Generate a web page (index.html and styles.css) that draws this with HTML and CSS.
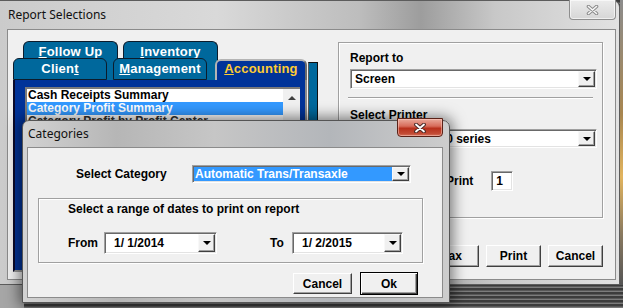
FILE: index.html
```html
<!DOCTYPE html>
<html lang="en">
<head>
    <meta charset="UTF-8" />
    <title>Report Selections</title>
    <link rel="stylesheet" href="styles.css">
</head>
<body>
    <div class="desktop">
        <div class="window main_win">
            <div class="titlebar">
                <span class="win_title">Report Selections</span>
                <span class="close_btn close_off">
                    <svg width="13" height="10" viewBox="0 0 13 10">
                        <path d="M2.5 1.5 L10.5 8.5 M10.5 1.5 L2.5 8.5" stroke="#8c8c8c" stroke-width="3.6" stroke-linecap="round" />
                        <path d="M2.5 1.5 L10.5 8.5 M10.5 1.5 L2.5 8.5" stroke="#f6f6f6" stroke-width="1.6" stroke-linecap="round" />
                    </svg>
                </span>
            </div>
            <div class="client main_client">
                <div class="tab_ctrl">
                    <div class="back_row">
                        <div class="tab"><u>F</u>ollow Up</div>
                        <div class="tab"><u>I</u>nventory</div>
                    </div>
                    <div class="front_row">
                        <div class="tab">Clien<u>t</u></div>
                        <div class="tab"><u>M</u>anagement</div>
                        <div class="tab tab_active"><u>A</u>ccounting</div>
                    </div>
                    <div class="tab_edge"></div>
                    <div class="tab_panel">
                        <div class="listbox">
                            <div class="list_items">
                                <div class="list_item">Cash Receipts Summary</div>
                                <div class="list_item list_active">Category Profit Summary</div>
                                <div class="list_item list_dim">Category Profit by Profit Center</div>
                            </div>
                            <div class="vscroll"><span class="arrow_up"></span></div>
                        </div>
                    </div>
                </div>
                <div class="side">
                    <div class="group report_box">
                        <div class="lbl">Report to</div>
                        <div class="combo combo_report">
                            <span class="combo_text">Screen</span>
                            <span class="combo_btn"></span>
                        </div>
                        <div class="sep"></div>
                        <div class="lbl lbl_printer">Select Printer</div>
                        <div class="combo combo_report combo_printer">
                            <span class="combo_text">HP Officejet 4500 series</span>
                            <span class="combo_btn"></span>
                        </div>
                        <div class="copies_row">
                            <span>Copies to Print</span>
                            <span class="edit">1</span>
                        </div>
                    </div>
                    <div class="btn_row">
                        <button class="btn">Fax</button>
                        <button class="btn">Print</button>
                        <button class="btn">Cancel</button>
                    </div>
                </div>
            </div>
        </div>

        <div class="window dlg">
            <div class="titlebar dlg_titlebar">
                <span class="win_title">Categories</span>
                <span class="close_btn close_on">
                    <svg width="14" height="10" viewBox="0 0 14 10">
                        <path d="M3 1.5 L11 8.5 M11 1.5 L3 8.5" stroke="#4a2a26" stroke-width="3.8" stroke-linecap="round" />
                        <path d="M3 1.5 L11 8.5 M11 1.5 L3 8.5" stroke="#ffffff" stroke-width="1.8" stroke-linecap="round" />
                    </svg>
                </span>
            </div>
            <div class="client dlg_client">
                <div class="cat_row">
                    <span class="cat_lbl">Select Category</span>
                    <div class="combo combo_cat">
                        <span class="combo_text text_sel">Automatic Trans/Transaxle</span>
                        <span class="combo_btn"></span>
                    </div>
                </div>
                <div class="group date_box">
                    <div class="date_hint">Select a range of dates to print on report</div>
                    <div class="date_row">
                        <span class="from_lbl">From</span>
                        <div class="combo combo_date">
                            <span class="combo_text">1/ 1/2014</span>
                            <span class="combo_btn"></span>
                        </div>
                        <span class="to_lbl">To</span>
                        <div class="combo combo_date combo_to">
                            <span class="combo_text">1/ 2/2015</span>
                            <span class="combo_btn"></span>
                        </div>
                    </div>
                </div>
                <div class="btn_row dlg_btns">
                    <button class="btn btn_cancel">Cancel</button>
                    <button class="btn btn_default">Ok</button>
                </div>
            </div>
        </div>
    </div>
</body>
</html>
```

FILE: styles.css
```css
* {
    box-sizing: border-box;
}

body {
    margin: 0;
    font-family: "Liberation Sans", Arial, sans-serif;
    font-size: 12px;
    font-weight: bold;
    color: #000;
}

.desktop {
    position: relative;
    width: 623px;
    height: 308px;
    overflow: hidden;
    background:
        linear-gradient(180deg, #8c8c8c 0, #a88650 40%, #e2b45e 62%, #8a7a60 82%, #555 100%) right top / 3px 285px no-repeat,
        linear-gradient(90deg, #a6a6a6 0 24px, transparent 24px),
        repeating-linear-gradient(180deg, #3c3c3c 0 2px, #585858 2px 3px, #7c7c7c 3px 4px);
}

/* windows sit on the desktop canvas */
.window {
    position: absolute;
    display: flex;
    flex-direction: column;
}

.main_win {
    left: 0;
    top: 0;
    width: 620px;
    height: 285px;
    padding: 0 3px 4px 7px;
    border: 1px solid #5c5c5c;
    border-left: none;
    border-radius: 0 7px 0 0;
    background: linear-gradient(90deg, #cbcbcb 0, #d9d9d9 35%, #bdbdbd 58%, #9d9d9d 68%, #c8c8c8 80%, #e2e2e2 100%);
}

.titlebar {
    display: flex;
    align-items: flex-start;
    height: 28px;
    flex-shrink: 0;
}

.win_title {
    margin: 6px 0 0 1px;
    font-family: "Noto Sans", "Liberation Sans", sans-serif;
    font-weight: normal;
    font-size: 12px;
    line-height: 16px;
    color: #111;
}

.close_btn {
    margin-left: auto;
    margin-top: -1px;
    width: 47px;
    height: 20px;
    display: flex;
    align-items: center;
    justify-content: center;
    border-radius: 0 0 4px 4px;
}

.close_off {
    border: 1px solid #8e8e8e;
    border-top: none;
    background: linear-gradient(180deg, #ececec, #d6d6d6);
    box-shadow: inset 0 0 0 1px rgba(255, 255, 255, 0.6);
}

.close_on {
    width: 46px;
    height: 19px;
    margin-top: -3px;
    border: 1px solid #5a2218;
    background: linear-gradient(180deg, #e9a99a 0, #d76c5a 42%, #b8311c 55%, #c24a34 85%, #d4735c 100%);
    box-shadow: inset 0 0 0 1px rgba(255, 210, 200, 0.5);
}

.client {
    flex: 1;
    background: #f0f0f0;
    border: 1px solid #8b8b8b;
}

.main_client {
    display: flex;
    gap: 20px;
    padding: 11px 12px 7px 5px;
}

/* tab control */
.tab_ctrl {
    width: 305px;
    display: grid;
    grid-template-columns: 294px 11px;
    grid-template-rows: 17px 22px 1fr;
}

.back_row {
    grid-column: 1;
    grid-row: 1 / 3;
    display: flex;
    gap: 5px;
    padding-left: 10px;
}

.front_row {
    grid-column: 1;
    grid-row: 2;
    display: flex;
    align-items: flex-end;
    position: relative;
    z-index: 1;
}

.tab {
    background: #00689c;
    color: #fff;
    font-size: 13px;
    letter-spacing: 0.2px;
    text-align: center;
    border: 1px solid #0c1c2c;
    border-radius: 6px 6px 0 0;
    white-space: nowrap;
}

.back_row .tab {
    width: 95px;
    line-height: 17px;
    padding-top: 1px;
    border-bottom: none;
}

.front_row .tab {
    width: 94px;
    height: 22px;
    margin-right: 6px;
    line-height: 19px;
}

.front_row .tab_active {
    width: 92px;
    height: 21px;
    margin: 0 0 0 2px;
    line-height: 16px;
    background: #003399;
    color: #ffcc33;
    border: 2px solid;
    border-color: #b4b4b4 #6a6a6a transparent #b4b4b4;
    border-bottom: none;
}

.tab_edge {
    grid-column: 2;
    grid-row: 2 / 4;
    margin: 4px 0 0 1px;
    background: #00689c;
    border: 1px solid #101010;
    border-left-color: #5a5a5a;
}

.tab_panel {
    grid-column: 1;
    grid-row: 3;
    background: #003399;
    border-left: 2px solid #0a0a2a;
    border-right: 2px solid #8a8a8a;
    border-bottom: 2px solid #9a9a9a;
    padding: 7px 0 0 10px;
    overflow: hidden;
}

.listbox {
    display: flex;
    width: 275px;
    height: 172px;
    background: #fff;
    border-top: 2px solid #7a7a7a;
    border-left: 2px solid #7a7a7a;
}

.list_items {
    flex: 1;
}

.list_item {
    height: 13px;
    line-height: 13px;
    padding-left: 1px;
    white-space: nowrap;
}

.list_active {
    background: #3399ff;
    color: #fff;
}

.list_dim {
    color: #333;
}

.vscroll {
    width: 17px;
    background: #f0f0f0;
    display: flex;
    flex-direction: column;
    align-items: center;
}

.arrow_up {
    margin-top: 7px;
    width: 0;
    border-left: 4px solid transparent;
    border-right: 4px solid transparent;
    border-bottom: 4px solid #404040;
}

/* right column */
.side {
    width: 265px;
    display: flex;
    flex-direction: column;
    margin-top: 1px;
}

.group {
    border: 1px solid #a0a0a0;
    box-shadow: inset 1px 1px 0 #fff, 1px 1px 0 #fff;
}

.report_box {
    height: 176px;
    padding: 8px 0 0 11px;
}

.lbl {
    line-height: 14px;
}

.combo {
    display: flex;
    background: #fff;
    border: 1px solid;
    border-color: #a0a0a0 #fff #fff #a0a0a0;
    padding: 1px;
    box-shadow: inset 1px 1px 0 #696969, inset -1px -1px 0 #e3e3e3;
}

.combo_text {
    flex: 1;
    padding-left: 3px;
    white-space: pre;
    overflow: hidden;
}

.combo_btn {
    width: 17px;
    flex-shrink: 0;
    background: #f0f0f0;
    border: 1px solid;
    border-color: #f8f8f8 #404040 #404040 #f8f8f8;
    box-shadow: inset -1px -1px 0 #a0a0a0;
    display: flex;
    align-items: center;
    justify-content: center;
}

.combo_btn::after {
    content: "";
    border-left: 4px solid transparent;
    border-right: 4px solid transparent;
    border-top: 4px solid #000;
}

.combo_report {
    width: 247px;
    height: 20px;
    margin-top: 4px;
}

.combo_report .combo_text {
    line-height: 17px;
}

.sep {
    width: 245px;
    margin: 8px 0 0 -2px;
    border-top: 1px solid #a0a0a0;
    border-bottom: 1px solid #fff;
}

.lbl_printer {
    margin-top: 9px;
}

.combo_printer {
    height: 19px;
    margin-top: 7px;
}

.combo_printer .combo_text {
    line-height: 16px;
}

.copies_row {
    display: flex;
    align-items: center;
    gap: 18px;
    margin-top: 23px;
    padding-left: 38px;
}

.edit {
    width: 22px;
    height: 20px;
    background: #fff;
    border: 1px solid;
    border-color: #a0a0a0 #fff #fff #a0a0a0;
    box-shadow: inset 1px 1px 0 #696969, inset -1px -1px 0 #e3e3e3;
    padding-left: 4px;
    line-height: 18px;
}

.btn_row {
    display: flex;
    justify-content: flex-end;
    gap: 7px;
    margin-top: 27px;
}

.btn {
    width: 55px;
    height: 22px;
    padding: 0;
    font: inherit;
    color: #000;
    background: #f0f0f0;
    border: 1px solid;
    border-color: #fff #404040 #404040 #fff;
    box-shadow: inset -1px -1px 0 #a0a0a0;
}

/* categories dialog */
.dlg {
    left: 22px;
    top: 120px;
    width: 428px;
    height: 183px;
    padding: 0 6px 4px 4px;
    border: 1px solid #555;
    border-radius: 7px 7px 0 0;
    background: linear-gradient(90deg, #d2d2d2 0, #b6b6b6 22%, #c6c6c6 45%, #b3b6ba 72%, #cdcdcd 100%);
    box-shadow: 0 0 14px 3px rgba(0, 0, 0, 0.5);
    z-index: 2;
}

.dlg_titlebar {
    height: 26px;
}

.dlg_titlebar .win_title {
    margin-top: 5px;
}

.dlg_client {
    display: flex;
    flex-direction: column;
}

.cat_row {
    display: flex;
    align-items: center;
    margin-top: 17px;
    padding-left: 48px;
}

.cat_lbl {
    width: 116px;
}

.combo_cat {
    width: 219px;
    height: 18px;
}

.combo_cat .combo_text {
    line-height: 14px;
}

.text_sel {
    background: #3399ff;
    color: #fff;
    padding-left: 1px;
}

.date_box {
    width: 385px;
    height: 65px;
    margin: 15px 0 0 10px;
    padding: 3px 0 0 29px;
}

.date_hint {
    line-height: 14px;
}

.date_row {
    display: flex;
    align-items: center;
    margin-top: 16px;
}

.from_lbl {
    width: 36px;
}

.combo_date {
    width: 113px;
    height: 22px;
}

.combo_date .combo_text {
    padding-left: 8px;
    line-height: 18px;
}

.to_lbl {
    width: 22px;
    margin-left: 53px;
}

.combo_to {
    width: 111px;
}

.dlg_btns {
    align-items: center;
    gap: 8px;
    margin-top: 9px;
    padding-right: 24px;
}

.btn_cancel {
    width: 59px;
    height: 21px;
}

.btn_default {
    width: 58px;
    height: 23px;
    border: 1px solid #000;
    box-shadow: inset 1px 1px 0 #fff, inset -1px -1px 0 #404040, inset -2px -2px 0 #a0a0a0;
}
```
